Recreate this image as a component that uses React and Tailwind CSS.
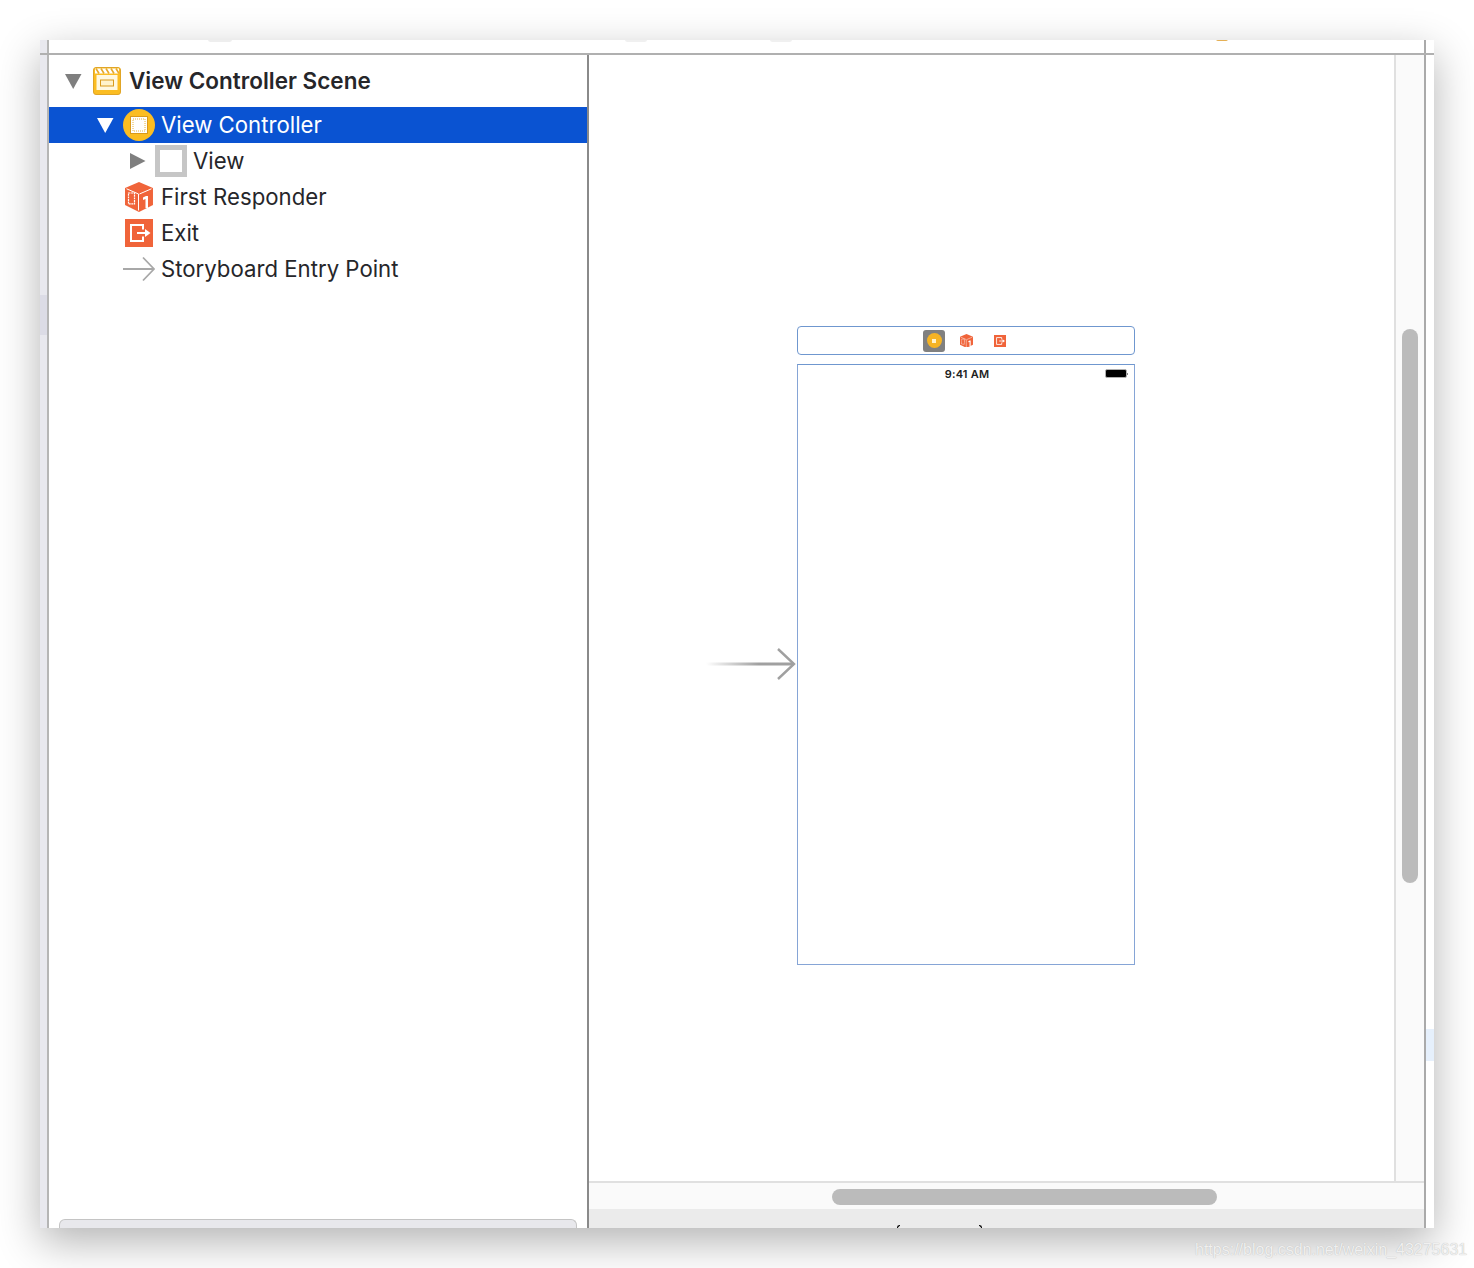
const font = { fontFamily: "Inter, Roboto, sans-serif" };

const Triangle = ({ open, white }) => (
  <svg width="18" height="18" viewBox="0 0 18 18" className="shrink-0">
    {open ? (
      <path d="M1 2 H17.5 L9.2 17 Z" fill={white ? "#fff" : "#7f7f7f"} />
    ) : (
      <path d="M1 1 L16.5 9 L1 17 Z" fill="#7f7f7f" />
    )}
  </svg>
);

const SceneIcon = () => (
  <svg width="28" height="28" viewBox="0 0 28 28" className="shrink-0">
    <rect x="0.5" y="0.5" width="27" height="27" rx="2.5" fill="#fbbd22" stroke="#e0a526" />
    <rect x="2" y="1.5" width="24" height="5" fill="#fff" />
    <path d="M3 1.5 L6 6.5 M8 1.5 L11 6.5 M13 1.5 L16 6.5 M18 1.5 L21 6.5 M23 1.5 L26 6.5" stroke="#e8a92c" strokeWidth="1.6" />
    <rect x="3.5" y="8" width="21" height="15" fill="#fff8e0" />
    <rect x="7.5" y="13" width="13" height="6" fill="#fff3cc" stroke="#d99a1c" strokeWidth="1" />
  </svg>
);

const ControllerIcon = () => (
  <svg width="32" height="32" viewBox="0 0 32 32" className="shrink-0">
    <circle cx="16" cy="16" r="16" fill="#fbbd22" />
    <rect x="7.5" y="7.5" width="17" height="17" fill="#fff" stroke="#d99a1c" strokeWidth="1" />
    <rect x="10" y="10" width="12" height="12" fill="#fff" stroke="#e9b43a" strokeWidth="1" strokeDasharray="1 1" />
  </svg>
);

const CubeIcon = ({ size = 28 }) => (
  <svg width={size} height={size * 1.07} viewBox="0 0 28 30" className="shrink-0">
    <path d="M14 0 L28 6 V23 L14 30 L0 23 V6 Z" fill="#f0643a" />
    <path d="M1.5 6.8 L13.5 12 V28.5 M26.5 6.8 L14.5 12" stroke="#fff" strokeWidth="1" fill="none" />
    <rect x="3.5" y="11" width="6" height="11" fill="none" stroke="#fff" strokeWidth="1.2" strokeDasharray="2 0.6" />
    <path d="M18 15.5 L21 14 H23 V26 H20.5 V17 L18 18 Z" fill="#fff" />
  </svg>
);

const ExitIcon = ({ size = 28 }) => (
  <svg width={size} height={size} viewBox="0 0 28 28" className="shrink-0">
    <rect width="28" height="28" fill="#f0643a" />
    <path d="M18 10.5 V6 H6 V22 H18 V17.5" fill="none" stroke="#fff" strokeWidth="2" />
    <path d="M12 14 H21" stroke="#fff" strokeWidth="2" />
    <path d="M20 10 L25.5 14 L20 18 Z" fill="#fff" />
  </svg>
);

const Row = ({ indent, selected, children, text }) => (
  <div className={`h-9 flex items-center ${indent} ${selected ? "bg-[#0a53d2]" : ""}`}>
    {children}
    <span className={`text-[22.2px] leading-none whitespace-nowrap ${selected ? "text-white" : "text-[#26262a]"}`}>{text}</span>
  </div>
);

export default function App() {
  return (
    <div className="relative w-[1474px] h-[1268px] bg-white pt-10 pl-10 overflow-hidden" style={font}>
      {/* window */}
      <div className="relative w-[1394px] h-[1188px] flex flex-col bg-white shadow-[0_14px_40px_rgba(0,0,0,0.3)]">
        <div className="h-[13px] flex shrink-0">
          <div className="w-[7px] bg-[#e8e8ee]" />
          <div className="w-0.5 bg-[#b5b5b5]" />
          <div className="w-[1375px] relative overflow-hidden">
            <div className="absolute left-[159px] top-[-3px] w-[24px] h-[5px] rounded-full bg-[#eeeeee]" />
            <div className="absolute left-[576px] top-[-3px] w-[22px] h-[5px] rounded-full bg-[#f0f0f0]" />
            <div className="absolute left-[721px] top-[-3px] w-[22px] h-[5px] rounded-full bg-[#f0f0f0]" />
            <div className="absolute left-[1167px] top-[-3px] w-[12px] h-[4px] rounded-full bg-[#e5b055]" />
          </div>
          <div className="w-0.5 bg-[#aaaaaa]" />
          <div className="w-2" />
        </div>
        <div className="h-0.5 bg-[#b0b0b0] shrink-0" />

        <div className="flex-1 flex min-h-0">
          {/* left strip */}
          <div className="w-[7px] bg-[#e8e8ee] pt-[240px]">
            <div className="h-10 bg-[#dcdce6]" />
          </div>
          <div className="w-0.5 bg-[#b5b5b5]" />

          {/* outline */}
          <div className="w-[538px] flex flex-col bg-white overflow-hidden">
            <div className="h-[52px] flex items-center pl-[15px]">
              <Triangle open />
              <div className="ml-[11px] mr-[8px] flex"><SceneIcon /></div>
              <span className="text-[22.5px] leading-none font-semibold text-[#26262a] whitespace-nowrap">View Controller Scene</span>
            </div>
            <Row indent="pl-[47px]" selected text="View Controller">
              <Triangle open white />
              <div className="ml-[9px] mr-[6px] flex"><ControllerIcon /></div>
            </Row>
            <Row indent="pl-[80px]" text="View">
              <Triangle />
              <div className="ml-[8px] mr-[6px] w-8 h-8 border-[5px] border-[#c6c6c6] bg-white shrink-0" />
            </Row>
            <Row indent="pl-[76px]" text="First Responder">
              <div className="mr-2 flex"><CubeIcon /></div>
            </Row>
            <Row indent="pl-[76px]" text="Exit">
              <div className="mr-2 flex"><ExitIcon /></div>
            </Row>
            <Row indent="pl-[74px]" text="Storyboard Entry Point">
              <svg width="32" height="26" viewBox="0 0 32 26" className="mr-1.5 shrink-0">
                <path d="M0 13 H31 M20 1.5 L31 13 L20 24.5" fill="none" stroke="#a8a8a8" strokeWidth="1.8" />
              </svg>
            </Row>
            <div className="flex-1" />
            <div className="h-[9px] mx-2.5 rounded-t-md border border-b-0 border-[#c4c4c4] bg-[#e8e8ec]" />
          </div>
          <div className="w-0.5 bg-[#8a8a8a]" />

          {/* canvas column */}
          <div className="w-[835px] flex flex-col">
            <div className="flex-1 flex min-h-0">
              <div className="w-[807px] border-r-2 border-[#e0e0e0] pt-[271px] pl-[208px] bg-white">
                <div className="w-[338px] h-[29px] rounded-[4px] border border-[#6f97cf] flex items-center pl-[125px]">
                  <div className="w-[22px] h-[22px] rounded-[3px] bg-[#808080] flex items-center justify-center">
                    <div className="w-[15px] h-[15px] rounded-full bg-[#f5b324] flex items-center justify-center">
                      <div className="w-1 h-1 bg-[#fff3cc]" />
                    </div>
                  </div>
                  <div className="ml-[15px] flex"><CubeIcon size={13} /></div>
                  <div className="ml-[21px] flex"><ExitIcon size={12} /></div>
                </div>
                <div className="relative mt-[9px] w-[338px] h-[601px] border border-[#86a5d6] border-t-[#6f97cf]">
                  <div className="text-[11px] leading-none font-semibold tracking-[0.2px] text-[#222] text-center pt-1 pl-[2px]">9:41 AM</div>
                  <div className="absolute right-[6px] top-[4px] flex items-center">
                    <div className="w-[22px] h-[9px] rounded-[2px] bg-black border border-[#b0b0b0]" />
                    <div className="w-px h-[2px] bg-[#888]" />
                  </div>
                  {/* entry point arrow */}
                  <svg width="90" height="34" viewBox="0 0 90 34" className="absolute left-[-92px] top-[282px]">
                    <defs>
                      <linearGradient id="fade" x1="0" x2="1" y1="0" y2="0">
                        <stop offset="0" stopColor="#a0a0a0" stopOpacity="0" />
                        <stop offset="0.6" stopColor="#a0a0a0" />
                      </linearGradient>
                    </defs>
                    <rect x="0" y="15.5" width="88" height="3" fill="url(#fade)" />
                    <path d="M72 2 L88 17 L72 32" fill="none" stroke="#a0a0a0" strokeWidth="2.4" />
                  </svg>
                </div>
              </div>
              <div className="w-7 bg-[#fafafa] pl-1.5 pt-[274px]">
                <div className="w-4 h-[554px] rounded-lg bg-[#bbbbbb]" />
              </div>
            </div>
            <div className="h-7 bg-[#fafafa] border-t-2 border-[#e0e0e0] pt-1.5 pl-[243px] shrink-0">
              <div className="w-[385px] h-4 rounded-lg bg-[#bbbbbb]" />
            </div>
            <div className="relative h-[19px] bg-[#ebebeb] shrink-0 overflow-hidden">
              <div className="absolute left-[308px] top-[16px] w-[3px] h-[3px] rounded-tl-full border-t border-l border-black" />
              <div className="absolute left-[390px] top-[16px] w-[3px] h-[3px] rounded-tr-full border-t border-r border-black" />
            </div>
          </div>
          <div className="w-0.5 bg-[#aaaaaa]" />

          {/* right strip */}
          <div className="w-2 bg-white pt-[974px]">
            <div className="h-8 bg-[#e6f0fc]" />
          </div>
        </div>
      </div>

      <div className="absolute left-[1195px] top-[1240px] text-[16px] leading-5 text-[#f0f0f0] [text-shadow:0_0_1px_#b0b0b0] whitespace-nowrap" style={{ fontFamily: "'Liberation Sans', sans-serif" }}>
        https://blog.csdn.net/weixin_43275631
      </div>
    </div>
  );
}
